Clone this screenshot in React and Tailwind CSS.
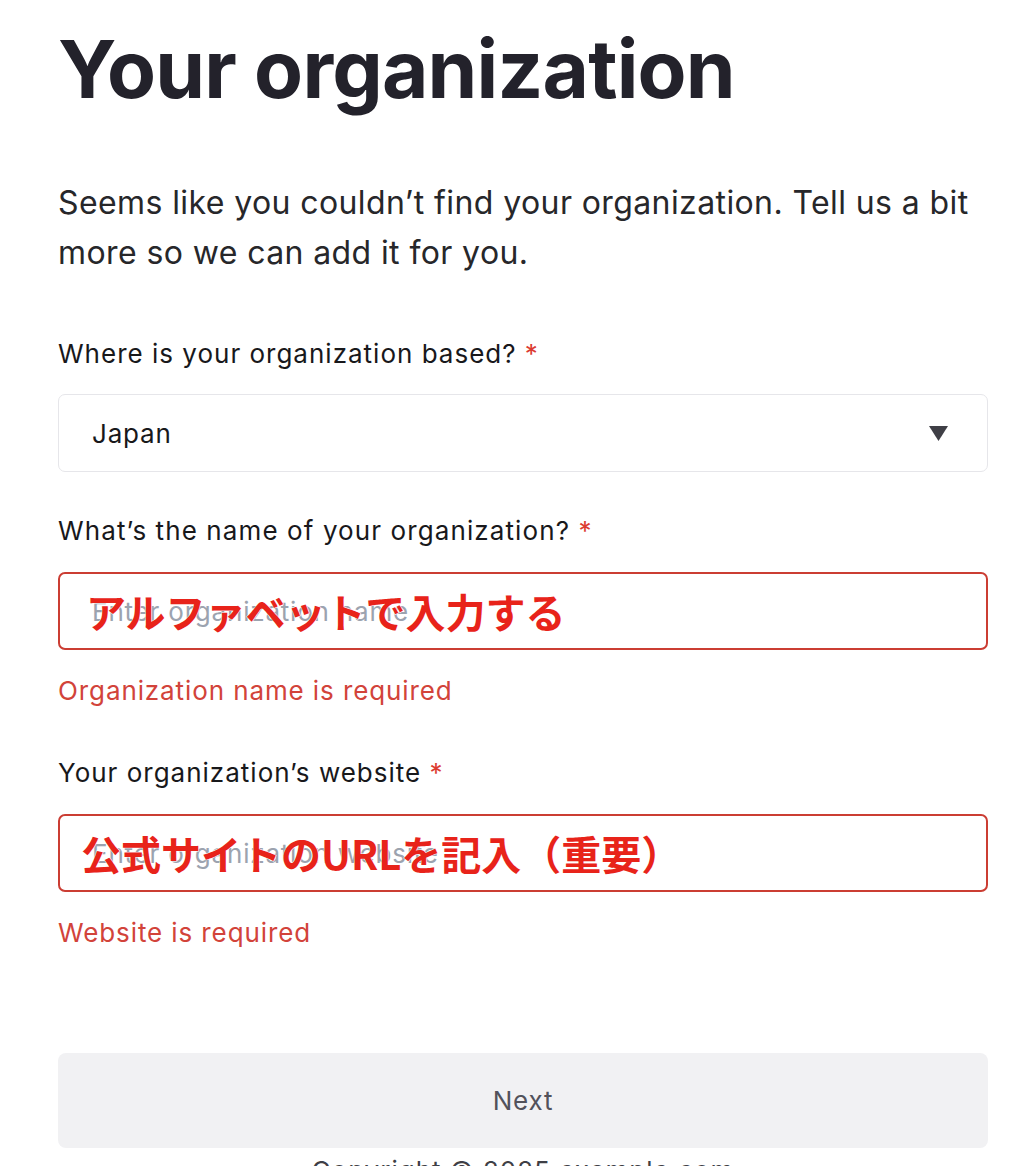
export default function App() {
  return (
    <div className="w-[1036px] h-[1166px] overflow-hidden bg-white font-['Inter','Noto_Sans',sans-serif]">
      <div className="ml-[58px] w-[930px] pt-[29px]">
        <h1 className="text-[80px] leading-[80px] font-bold text-[#23222b] tracking-[-0.01em]">Your organization</h1>
        <p className="mt-[69px] text-[32px] leading-[50px] tracking-[0.4px] text-[#27272a]">
          Seems like you couldn’t find your organization. Tell us a bit more so we can add it for you.
        </p>

        <div className="mt-[58px] text-[26px] leading-[36px] tracking-[1px] text-[#18181b]">
          Where is your organization based? <span className="text-[#dc3b31]">*</span>
        </div>
        <div className="mt-[22px] h-[78px] rounded-[7px] border border-[#e6e6ea] flex items-center justify-between pl-[33px] pr-[38px]">
          <span className="text-[26px] tracking-[0.8px] text-[#18181b]">Japan</span>
          <svg width="21" height="17" viewBox="0 0 21 17">
            <path d="M1 1 L20 1 L10.5 16 Z" fill="#3f3f46" />
          </svg>
        </div>

        <div className="mt-[41px] text-[26px] leading-[36px] tracking-[1.1px] text-[#18181b]">
          What’s the name of your organization? <span className="text-[#dc3b31]">*</span>
        </div>
        <div className="relative mt-[23px] h-[78px] rounded-[7px] border-2 border-[#cb3d33] flex items-center pl-[32px]">
          <span className="text-[26px] tracking-[0.8px] text-[#9ca3af]">Enter organization name</span>
          <span className="absolute left-[26px] top-1/2 -translate-y-1/2 text-[40px] font-bold leading-none text-[#e8231a] font-['Noto_Sans_CJK_JP',sans-serif] [-webkit-text-stroke:1px_white] [paint-order:stroke_fill]">
            アルファベットで入力する
          </span>
        </div>
        <div className="mt-[23px] text-[26px] leading-[36px] tracking-[0.9px] text-[#d2433a]">Organization name is required</div>

        <div className="mt-[46px] text-[26px] leading-[36px] tracking-[1px] text-[#18181b]">
          Your organization’s website <span className="text-[#dc3b31]">*</span>
        </div>
        <div className="relative mt-[23px] h-[78px] rounded-[7px] border-2 border-[#cb3d33] flex items-center pl-[32px]">
          <span className="text-[26px] tracking-[0.8px] text-[#9ca3af]">Enter organization website</span>
          <span className="absolute left-[21px] top-1/2 -translate-y-1/2 text-[40px] font-bold leading-none text-[#e8231a] font-['Noto_Sans_CJK_JP',sans-serif] [-webkit-text-stroke:1px_white] [paint-order:stroke_fill]">
            公式サイトのURLを記入（重要）
          </span>
        </div>
        <div className="mt-[23px] text-[26px] leading-[36px] tracking-[0.9px] text-[#d2433a]">Website is required</div>

        <button className="mt-[102px] w-full h-[95px] rounded-[8px] bg-[#f1f1f3] text-[26px] tracking-[0.8px] text-[#52525b] flex items-center justify-center">
          Next
        </button>
        <div className="mt-[5px] text-center text-[26px] leading-[36px] tracking-[1px] text-[#3f3f46]">
          Copyright © 2025 example.com
        </div>
      </div>
    </div>
  );
}
